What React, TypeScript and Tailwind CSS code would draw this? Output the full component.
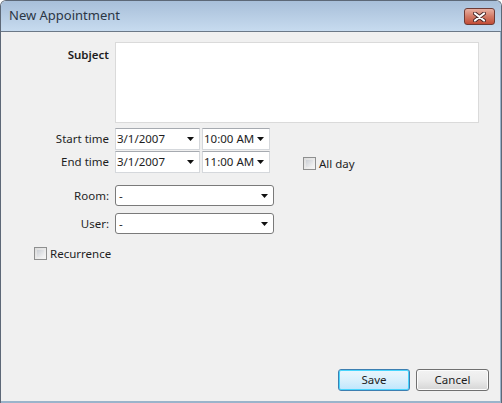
import React from "react";

const font = { fontFamily: '"Noto Sans", "Open Sans", sans-serif' };

function Arrow() {
  return (
    <svg width="7" height="4" viewBox="0 0 7 4" className="shrink-0">
      <path d="M0 0h7L3.5 4z" fill="#111" />
    </svg>
  );
}

function Picker({ value, w }: { value: string; w: string }) {
  return (
    <div
      className={`${w} h-[22px] bg-white border border-[#d5d8dc] border-t-[#a6aab0] flex items-center justify-between pl-[1px] pr-[5px]`}
    >
      <span>{value}</span>
      <Arrow />
    </div>
  );
}

function Combo() {
  return (
    <div className="w-[159px] h-[21px] bg-white border border-[#7a7a7a] rounded-[3px] flex items-center justify-between pl-[3px] pr-[5px]">
      <span>-</span>
      <Arrow />
    </div>
  );
}

function Check({ label }: { label: string }) {
  return (
    <div className="flex items-center gap-[3px]">
      <div className="w-[13px] h-[13px] border border-[#8e8f8f] bg-gradient-to-br from-[#dcdcdc] to-[#f6f6f6] p-[2px]">
        <div className="w-full h-full bg-gradient-to-br from-[#cbcfd5] to-[#f4f4f4]" />
      </div>
      <span>{label}</span>
    </div>
  );
}

export default function App() {
  return (
    <div
      className="w-[502px] h-[403px] flex flex-col text-[11.5px] text-[#1e1e1e] rounded-t-[6px] overflow-hidden border border-b-0 border-[#5d6877]"
      style={font}
    >
      {/* title bar */}
      <div className="h-[30px] shrink-0 flex items-center justify-between pl-[8px] pr-[6px] bg-gradient-to-b from-[#a8bfd9] to-[#c7dbef]">
        <span className="text-[13px] text-[#2b3645]">New Appointment</span>
        <div className="w-[31px] h-[17px] mt-[1px] rounded-[3px] border border-[#6e3b35] bg-gradient-to-b from-[#e8b0a2] via-[#d27a66] to-[#c24c36] flex items-center justify-center">
          <svg width="13" height="10" viewBox="0 0 13 10">
            <path d="M2 1.5l9 7M11 1.5l-9 7" stroke="#4a2a2a" strokeWidth="4" strokeLinecap="round" />
            <path d="M2 1.5l9 7M11 1.5l-9 7" stroke="#fff" strokeWidth="2.2" strokeLinecap="round" />
          </svg>
        </div>
      </div>

      {/* body */}
      <div className="flex-1 flex flex-col bg-[#f0f0f0] border-t border-[#6b7887] border-l border-l-[#9ab4cb] border-r-2 border-r-[#9ab4cb] border-b-2 border-b-[#9ab4cb] -ml-px -mr-px pt-[10px] pb-[10px] pr-[10px]">
        <div className="flex">
          <div className="w-[108px] text-right font-semibold pt-[4px]">Subject</div>
          <div className="ml-[6px] w-[364px] h-[81px] bg-white border border-[#dadada]" />
        </div>

        <div className="flex items-center mt-[5px]">
          <div className="w-[108px] text-right">Start time</div>
          <div className="ml-[6px] flex gap-[2px]">
            <Picker value="3/1/2007" w="w-[85px]" />
            <Picker value="10:00 AM" w="w-[68px]" />
          </div>
        </div>

        <div className="flex items-center mt-[1px]">
          <div className="w-[108px] text-right">End time</div>
          <div className="ml-[6px] flex gap-[2px]">
            <Picker value="3/1/2007" w="w-[85px]" />
            <Picker value="11:00 AM" w="w-[68px]" />
          </div>
          <div className="ml-[33px] mt-[3px]">
            <Check label="All day" />
          </div>
        </div>

        <div className="flex items-center mt-[12px]">
          <div className="w-[108px] text-right">Room:</div>
          <div className="ml-[6px]">
            <Combo />
          </div>
        </div>

        <div className="flex items-center mt-[7px]">
          <div className="w-[108px] text-right">User:</div>
          <div className="ml-[6px]">
            <Combo />
          </div>
        </div>

        <div className="mt-[11px] ml-[33px]">
          <Check label="Recurrence" />
        </div>

        <div className="mt-auto flex justify-end gap-[6px] pr-[1px]">
          <button className="w-[72px] h-[22px] rounded-[3px] border border-[#3c7fb1] shadow-[inset_0_0_0_1px_#48d5fd] bg-gradient-to-b from-[#eaf6fd] via-[#d9f0fc] to-[#bee6fd]">
            Save
          </button>
          <button className="w-[73px] h-[22px] rounded-[3px] border border-[#707070] shadow-[inset_0_0_0_1px_#fcfcfc] bg-gradient-to-b from-[#f2f2f2] via-[#ebebeb] to-[#d5d5d5]">
            Cancel
          </button>
        </div>
      </div>
    </div>
  );
}
